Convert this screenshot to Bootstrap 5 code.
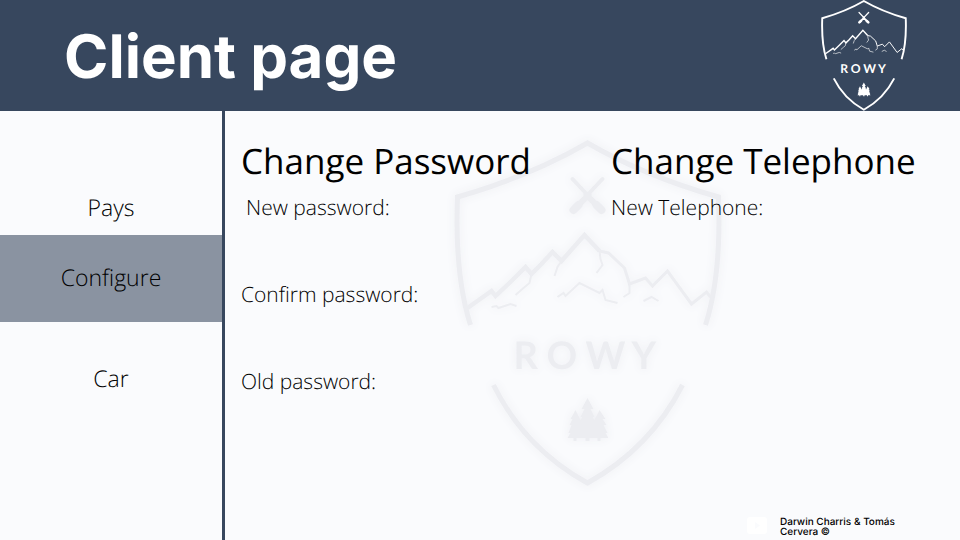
<!DOCTYPE html>
<html lang="en">
<head>
<meta charset="utf-8">
<meta name="viewport" content="width=device-width, initial-scale=1">
<title>Client page</title>
<link href="https://cdn.jsdelivr.net/npm/bootstrap@5.3.0/dist/css/bootstrap.min.css" rel="stylesheet">
<style>
  :root { --navy: #37475e; --slate: #8a93a1; --paper: #fafbfd; }
  body { font-family: "Open Sans", sans-serif; font-weight: 300; background: var(--paper); color: #000; text-rendering: geometricPrecision; }
  .site-header { background: var(--navy); padding: 0 52px 0 64px; }
  .site-title { font: 700 60px/72px Inter, sans-serif; padding-top: 3px; }
  .brand-logo { height: 111px; width: 88px; color: #fff; }
  .brand-logo use { stroke-width: 6; }
  .side-menu { flex: 0 0 225px; border-right: 3px solid var(--navy); padding-top: 54px; }
  .side-menu .nav-link { font-size: 23px; line-height: 33px; padding: 26px 0 28px; color: #000; text-align: center; }
  .side-menu .nav-link:first-child { padding-bottom: 11px; }
  .side-menu .nav-link.active { background: var(--slate); }
  .side-menu .nav-link:last-child { margin-top: 14px; }
  .forms-area { padding: 24px 16px 0; }
  .watermark { width: 268px; height: 347px; top: 29px; left: 229px; color: #ecedf1; filter: drop-shadow(0 0 4px #eeeff3); }
  .form-grid { display: grid; grid-template-columns: 370px 1fr; }
  .form-grid h2 { font-size: 35px; line-height: 54px; font-weight: 400; white-space: nowrap; margin: 0; }
  .form-grid label { font-size: 21px; line-height: 38px; display: block; }
  .form-grid .label-inset { padding-left: 5px; }
  .form-grid input { height: 49px; font-size: 21px; font-weight: 300; padding: 0 8px; width: 320px; max-width: 90%; }
  .credits { font: 500 10px/10px Inter, sans-serif; gap: 12px; padding: 0 44px 3px 0; }
  .credits p { width: 136px; margin: 0; }
  .video-link { line-height: 0; color: #fff; }
</style>
<script src="https://cdn.jsdelivr.net/npm/bootstrap@5.3.0/dist/js/bootstrap.bundle.min.js"></script>
</head>
<body class="d-flex flex-column min-vh-100">

<svg class="d-none" aria-hidden="true">
  <symbol id="crest" viewBox="14 10 267 347">
    <g fill="none" stroke="currentColor" stroke-linejoin="miter">
      <path d="M30 195Q14 145 17 67Q90 46 147 13Q204 46 278 67Q281 145 265 195"/>
      <path d="M53 255Q84 318 147 353Q210 318 242 255"/>
    </g>
    <g fill="none" stroke="currentColor" stroke-width="4.4">
      <path d="M27 178L51 161L55 166L71 151L85 137L91 144L101 134L112 122L121 131L144 105L159 121"/>
      <path stroke-width="3" d="M159 121L168 123L184 138L189 154L205 148L212 156L227 141L251 174L266 162L270 167"/>
    </g>
    <g fill="none" stroke="currentColor" stroke-width="2">
      <path d="M91 144L89 153L83 158L75 165M121 131L117 137L114 146M159 121L160 129L162 135L156 143M189 154L189 163L183 167"/>
      <path d="M117 167L123 163L125 166L139 153L159 163L162 160L165 170L177 173M51 177L56 176L58 178L70 174L76 176M203 171L211 167L218 171"/>
    </g>
    <g stroke="currentColor" fill="none" stroke-linecap="round">
      <path stroke-width="4" d="M132 49L148 66M162 49L146 66"/>
      <path stroke-width="6" d="M148 65L134 79M146 65L160 79"/>
      <path stroke-width="8" d="M138 75L133 80M156 75L161 80"/>
    </g>
    <text x="73 106 145 191" y="239" font-family="Lato, sans-serif" font-weight="700" font-size="38" fill="currentColor">ROWY</text>
    <path fill="currentColor" d="M147 268L153 279L150 279L154 287L152 287L154 290L159 280L165 289L162 289L166 295L163 295L167 303L165 303L168 308H160V311H157V308H149V311H145V308H136V311H133V308H127L130 303L128 303L131 295L129 295L132 289L130 289L135 280L140 290L142 287L140 287L144 279L141 279Z"/>
  </symbol>
</svg>

<header class="site-header d-flex align-items-center justify-content-between">
  <h1 class="site-title text-white m-0">Client page</h1>
  <svg class="brand-logo" role="img" aria-label="Rowy"><use href="#crest"/></svg>
</header>

<div class="d-flex flex-grow-1">
  <nav class="side-menu nav flex-column flex-nowrap" aria-label="Client menu">
    <a class="nav-link" href="#pays">Pays</a>
    <a class="nav-link active" href="#configure" aria-current="page">Configure</a>
    <a class="nav-link" href="#car">Car</a>
  </nav>

  <main class="forms-area position-relative flex-grow-1">
    <svg class="watermark position-absolute" aria-hidden="true"><use href="#crest" stroke-width="5"/></svg>
    <div class="form-grid position-relative">
      <form>
        <h2>Change Password</h2>
        <label class="label-inset" for="new-password">New password:</label>
        <input class="border-0 bg-transparent" type="password" id="new-password">
        <label for="confirm-password">Confirm password:</label>
        <input class="border-0 bg-transparent" type="password" id="confirm-password">
        <label for="old-password">Old password:</label>
        <input class="border-0 bg-transparent" type="password" id="old-password">
      </form>
      <form>
        <h2>Change Telephone</h2>
        <label for="new-telephone">New Telephone:</label>
        <input class="border-0 bg-transparent" type="tel" id="new-telephone">
      </form>
    </div>
    <footer class="credits d-flex justify-content-end position-absolute bottom-0 end-0">
      <a class="video-link" href="#video" aria-label="Video">
        <svg width="22" height="18" viewBox="0 0 22 18"><rect x="1" y="0" width="20" height="17" rx="3" fill="currentColor"/><path d="M9 5L14 8.500L9 12Z" fill="#fafbfd"/></svg>
      </a>
      <p>Darwin Charris &amp; Tomás Cervera ©</p>
    </footer>
  </main>
</div>
</body>
</html>
